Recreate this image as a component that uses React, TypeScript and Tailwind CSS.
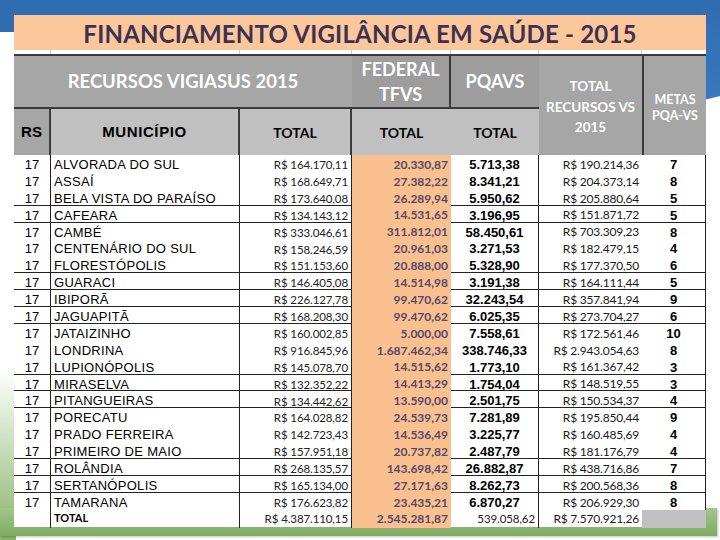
const cols = "grid grid-cols-[37px_189px_112px_99px_88px_103px_64px]";

type Row = {
  name: string;
  vigia: string;
  tfvs: string;
  pqavs: string;
  total: string;
  metas: string;
  line?: boolean;
};

const rows: Row[] = [
  { name: "ALVORADA DO SUL", vigia: "R$ 164.170,11", tfvs: "20.330,87", pqavs: "5.713,38", total: "R$ 190.214,36", metas: "7" },
  { name: "ASSAÍ", vigia: "R$ 168.649,71", tfvs: "27.382,22", pqavs: "8.341,21", total: "R$ 204.373,14", metas: "8" },
  { name: "BELA VISTA DO PARAÍSO", vigia: "R$ 173.640,08", tfvs: "26.289,94", pqavs: "5.950,62", total: "R$ 205.880,64", metas: "5", line: true },
  { name: "CAFEARA", vigia: "R$ 134.143,12", tfvs: "14.531,65", pqavs: "3.196,95", total: "R$ 151.871,72", metas: "5", line: true },
  { name: "CAMBÉ", vigia: "R$ 333.046,61", tfvs: "311.812,01", pqavs: "58.450,61", total: "R$ 703.309,23", metas: "8" },
  { name: "CENTENÁRIO DO SUL", vigia: "R$ 158.246,59", tfvs: "20.961,03", pqavs: "3.271,53", total: "R$ 182.479,15", metas: "4" },
  { name: "FLORESTÓPOLIS", vigia: "R$ 151.153,60", tfvs: "20.888,00", pqavs: "5.328,90", total: "R$ 177.370,50", metas: "6", line: true },
  { name: "GUARACI", vigia: "R$ 146.405,08", tfvs: "14.514,98", pqavs: "3.191,38", total: "R$ 164.111,44", metas: "5", line: true },
  { name: "IBIPORÃ", vigia: "R$ 226.127,78", tfvs: "99.470,62", pqavs: "32.243,54", total: "R$ 357.841,94", metas: "9", line: true },
  { name: "JAGUAPITÃ", vigia: "R$ 168.208,30", tfvs: "99.470,62", pqavs: "6.025,35", total: "R$ 273.704,27", metas: "6", line: true },
  { name: "JATAIZINHO", vigia: "R$ 160.002,85", tfvs: "5.000,00", pqavs: "7.558,61", total: "R$ 172.561,46", metas: "10" },
  { name: "LONDRINA", vigia: "R$ 916.845,96", tfvs: "1.687.462,34", pqavs: "338.746,33", total: "R$ 2.943.054,63", metas: "8" },
  { name: "LUPIONÓPOLIS", vigia: "R$ 145.078,70", tfvs: "14.515,62", pqavs: "1.773,10", total: "R$ 161.367,42", metas: "3", line: true },
  { name: "MIRASELVA", vigia: "R$ 132.352,22", tfvs: "14.413,29", pqavs: "1.754,04", total: "R$ 148.519,55", metas: "3", line: true },
  { name: "PITANGUEIRAS", vigia: "R$ 134.442,62", tfvs: "13.590,00", pqavs: "2.501,75", total: "R$ 150.534,37", metas: "4", line: true },
  { name: "PORECATU", vigia: "R$ 164.028,82", tfvs: "24.539,73", pqavs: "7.281,89", total: "R$ 195.850,44", metas: "9" },
  { name: "PRADO FERREIRA", vigia: "R$ 142.723,43", tfvs: "14.536,49", pqavs: "3.225,77", total: "R$ 160.485,69", metas: "4" },
  { name: "PRIMEIRO DE MAIO", vigia: "R$ 157.951,18", tfvs: "20.737,82", pqavs: "2.487,79", total: "R$ 181.176,79", metas: "4", line: true },
  { name: "ROLÂNDIA", vigia: "R$ 268.135,57", tfvs: "143.698,42", pqavs: "26.882,87", total: "R$ 438.716,86", metas: "7", line: true },
  { name: "SERTANÓPOLIS", vigia: "R$ 165.134,00", tfvs: "27.171,63", pqavs: "8.262,73", total: "R$ 200.568,36", metas: "8", line: true },
  { name: "TAMARANA", vigia: "R$ 176.623,82", tfvs: "23.435,21", pqavs: "6.870,27", total: "R$ 206.929,30", metas: "8" },
];

const arial = "font-['Liberation_Sans',Arial,sans-serif]";
const cal = "font-['Lato',sans-serif]";

function DataRow({ r }: { r: Row }) {
  return (
    <div className={`${cols} h-[16.9px] ${r.line ? "border-b border-[#222]" : ""}`}>
      <div className={`flex items-center justify-center border-r border-[#222] ${arial} text-[13px] text-black`}>17</div>
      <div className={`flex items-center border-r border-[#222] pl-[3px] ${arial} text-[13px] tracking-[0.3px] text-black`}>{r.name}</div>
      <div className={`flex items-center justify-end border-r border-[#222] pr-[3px] ${cal} text-[11.5px] tracking-[-0.1px] text-[#222]`}>{r.vigia}</div>
      <div className={`flex items-center justify-end bg-[#fbc08f] pr-[3px] ${cal} text-[12px] font-bold text-[#54496a]`}>{r.tfvs}</div>
      <div className={`flex items-center justify-center border-r border-[#222] ${arial} text-[13px] font-bold text-black`}>{r.pqavs}</div>
      <div className={`flex items-center justify-end pr-[3px] ${cal} text-[12px] tracking-[-0.2px] text-[#1a1a1a]`}>{r.total}</div>
      <div className={`flex items-center justify-center border-r border-[#222] ${arial} text-[13px] font-bold text-black`}>{r.metas}</div>
    </div>
  );
}

export default function App() {
  return (
    <div className="relative h-[540px] w-[720px] overflow-hidden bg-white">
      {/* slide background */}
      <div className="absolute left-0 top-0 h-[32px] w-full bg-[#2f6cb0]" />
      <div className="absolute right-0 top-0 h-[101px] w-[20px] bg-linear-to-b from-[#2f6cb0] to-[#3a78bd] [clip-path:polygon(0_0,100%_0,100%_95%,0_100%)]" />
      <div className="absolute left-0 top-[370px] h-[170px] w-[16px] bg-linear-to-b from-white to-[#8ab26b]" />
      <div className="absolute left-0 top-[508px] h-[28px] w-[717px] bg-linear-to-b from-[#a3c68b] to-[#7fab60] shadow-[1px_1px_2px_rgba(0,0,0,0.25)]" />

      <div className="relative ml-[14px] w-[692px] pt-[15px]">
        <div className={`flex h-[35px] items-center justify-center bg-[#fcc89b] pt-[2px] ${cal} text-[24px] font-bold tracking-[0.2px] text-[#3f3151]`}>
          FINANCIAMENTO VIGILÂNCIA EM SAÚDE - 2015
        </div>
        <div className={`${cols} h-[4px] bg-white`}>
          <div className="border-r border-[#d0d0d0]" />
          <div className="border-r border-[#d0d0d0]" />
          <div className="border-r border-[#d0d0d0]" />
          <div className="border-r border-[#d0d0d0]" />
          <div className="border-r border-[#d0d0d0]" />
          <div className="border-r border-[#d0d0d0]" />
          <div />
        </div>

        <div className={`${cols} grid-rows-[53px_46px] border-t-2 border-[#3a3a3a]`}>
          <div className={`col-span-3 flex items-center justify-center border-b-2 border-[#3a3a3a] bg-[#a6a6a6] ${cal} text-[18.5px] font-bold text-white`}>
            RECURSOS VIGIASUS 2015
          </div>
          <div className={`flex flex-col items-center justify-center border-r-2 border-b-2 border-[#3a3a3a] bg-[#9d9d9d] ${cal} text-[18px] font-bold leading-[25px] text-white`}>
            <span>FEDERAL</span>
            <span>TFVS</span>
          </div>
          <div className={`flex items-center justify-center border-b-2 border-[#3a3a3a] bg-[#9d9d9d] ${cal} text-[18px] font-bold text-white`}>
            PQAVS
          </div>
          <div className={`row-span-2 flex flex-col items-center justify-center bg-[#a6a6a6] pt-[3px] ${cal} text-[13.5px] font-bold leading-[20.5px] text-white`}>
            <span>TOTAL</span>
            <span>RECURSOS VS</span>
            <span>2015</span>
          </div>
          <div className={`row-span-2 flex flex-col items-center justify-center border-l-2 border-[#3a3a3a] bg-[#a6a6a6] pt-[5px] ${cal} text-[12.5px] font-bold leading-[16px] text-white`}>
            <span>METAS</span>
            <span>PQA-VS</span>
          </div>
          <div className={`flex items-center justify-center border-r-2 border-[#3a3a3a] bg-[#a6a6a6] ${arial} text-[15px] font-bold text-black`}>RS</div>
          <div className={`flex items-center justify-center border-r-2 border-[#3a3a3a] bg-[#c0c0c0] ${arial} text-[15px] font-bold tracking-[0.6px] text-black`}>MUNICÍPIO</div>
          <div className={`flex items-center justify-center border-r-2 border-[#3a3a3a] bg-[#c0c0c0] ${cal} text-[14px] font-bold text-black`}>TOTAL</div>
          <div className={`flex items-center justify-center bg-[#c0c0c0] ${cal} text-[14px] font-bold text-black`}>TOTAL</div>
          <div className={`flex items-center justify-center bg-[#c0c0c0] ${cal} text-[14px] font-bold text-black`}>TOTAL</div>
        </div>

        <div className="bg-white">
          {rows.map((r) => (
            <DataRow key={r.name} r={r} />
          ))}
          <div className={`${cols} h-[16.9px]`}>
            <div className="border-r border-[#222]" />
            <div className={`flex items-center border-r border-[#222] pl-[3px] ${cal} text-[11px] font-bold text-black`}>TOTAL</div>
            <div className={`flex items-center justify-end border-r border-[#222] pr-[3px] ${cal} text-[11.5px] tracking-[-0.1px] text-[#222]`}>R$ 4.387.110,15</div>
            <div className={`flex items-center justify-end bg-[#fbc08f] pr-[3px] ${cal} text-[12px] font-bold text-[#54496a]`}>2.545.281,87</div>
            <div className={`flex items-center justify-end border-r border-[#222] pr-[3px] ${cal} text-[11.5px] tracking-[-0.1px] text-[#222]`}>539.058,62</div>
            <div className={`flex items-center justify-end pr-[3px] ${cal} text-[12px] tracking-[-0.2px] text-[#1a1a1a]`}>R$ 7.570.921,26</div>
            <div className="bg-[#c0c0c0]" />
          </div>
        </div>
      </div>
    </div>
  );
}
